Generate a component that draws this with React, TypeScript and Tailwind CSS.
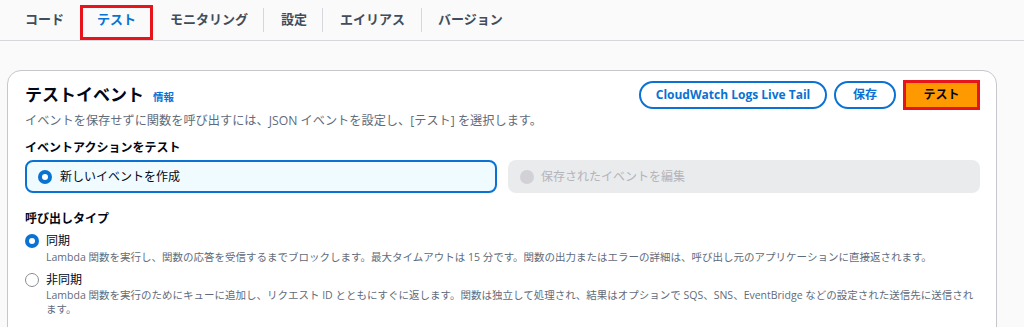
import React from "react";

const font = "font-['Open_Sans','Noto_Sans_CJK_JP',sans-serif]";

function Radio({ checked, disabled }: { checked?: boolean; disabled?: boolean }) {
  if (disabled) {
    return <span className="block w-[14px] h-[14px] rounded-full bg-[#d1d1d6] shrink-0" />;
  }
  if (checked) {
    return (
      <span className="flex items-center justify-center w-[14px] h-[14px] rounded-full bg-[#0972d3] shrink-0">
        <span className="block w-[6px] h-[6px] rounded-full bg-white" />
      </span>
    );
  }
  return <span className="block w-[14px] h-[14px] rounded-full border-[1.5px] border-[#8c8c94] bg-white shrink-0" />;
}

function Tabs() {
  return (
    <div className="flex items-center h-[41px] pl-[8px] border-b border-[#d5d7dc] text-[13px] font-bold text-[#414d5c]">
      <div className="w-[72px] pl-[17px]">コード</div>
      <div className="relative w-[73px] h-[35px] mt-[5px] pl-[17px] flex items-center text-[#0972d3]">
        <span className="-mt-[5px]">テスト</span>
        {/* red highlight annotation */}
        <span className="absolute inset-0 border-[3px] border-[#e8141b] pointer-events-none" />
      </div>
      <div className="w-[110px] pl-[17px]">モニタリング</div>
      <span className="block w-px h-[24px] bg-[#d5d7dc]" />
      <div className="w-[58px] pl-[17px]">設定</div>
      <span className="block w-px h-[24px] bg-[#d5d7dc]" />
      <div className="w-[98px] pl-[17px]">エイリアス</div>
      <span className="block w-px h-[24px] bg-[#d5d7dc]" />
      <div className="pl-[16px]">バージョン</div>
    </div>
  );
}

export default function App() {
  return (
    <div className={`${font} w-[1024px] h-[327px] overflow-hidden bg-[#fafafa] text-[#000716]`}>
      <Tabs />

      <div className="ml-[7px] mt-[29px] w-[990px] h-[400px] rounded-[14px] border border-[#c6c6cd] bg-white pl-[17px] pr-[16px] pt-[10px]">
        {/* header */}
        <div className="flex justify-between items-center h-[28px]">
          <div className="flex items-baseline gap-[9px]">
            <h2 className="text-[17px] font-bold leading-[24px]">テストイベント</h2>
            <span className="text-[10.5px] font-bold text-[#0972d3]">情報</span>
          </div>
          <div className="flex items-center gap-[7px]">
            <button className="h-[28px] w-[188px] rounded-full border-2 border-[#0972d3] text-[12px] font-bold text-[#0972d3]">
              CloudWatch Logs Live Tail
            </button>
            <button className="h-[28px] w-[62px] rounded-full border-2 border-[#0972d3] text-[12px] font-bold text-[#0972d3]">
              保存
            </button>
            <button className="relative h-[30px] w-[77px] bg-[#ff9900] text-[12px] font-bold text-[#000716]">
              テスト
              <span className="absolute inset-0 border-[3px] border-[#e8141b]" />
            </button>
          </div>
        </div>

        <p className="mt-[4px] text-[12.2px] leading-[16px] text-[#5f6b7a]">
          イベントを保存せずに関数を呼び出すには、JSON イベントを設定し、[テスト] を選択します。
        </p>

        <div className="mt-[11px] text-[12px] font-bold leading-[16px]">イベントアクションをテスト</div>

        <div className="mt-[4px] grid grid-cols-2 gap-[11px]">
          <div className="h-[33px] flex items-center gap-[8px] pl-[11px] rounded-[8px] border-2 border-[#0972d3] bg-[#f0fbff] text-[12px]">
            <Radio checked />
            <span>新しいイベントを作成</span>
          </div>
          <div className="h-[33px] flex items-center gap-[7px] pl-[12px] rounded-[8px] bg-[#e9ebed] text-[12px] text-[#b4b4bb]">
            <Radio disabled />
            <span>保存されたイベントを編集</span>
          </div>
        </div>

        <div className="mt-[18px] text-[12px] font-bold leading-[16px]">呼び出しタイプ</div>

        <div className="mt-[6px] flex items-center gap-[7px] h-[16px] text-[12px]">
          <Radio checked />
          <span>同期</span>
        </div>
        <p className="mt-[1px] pl-[21px] text-[10.5px] leading-[14px] text-[#5f6b7a]">
          Lambda 関数を実行し、関数の応答を受信するまでブロックします。最大タイムアウトは 15 分です。関数の出力またはエラーの詳細は、呼び出し元のアプリケーションに直接返されます。
        </p>

        <div className="mt-[8px] flex items-center gap-[7px] h-[16px] text-[12px]">
          <Radio />
          <span>非同期</span>
        </div>
        <p className="mt-[1px] -mr-[2px] pl-[21px] text-[10.5px] leading-[13.5px] text-[#5f6b7a]">
          Lambda 関数を実行のためにキューに追加し、リクエスト ID とともにすぐに返します。関数は独立して処理され、結果はオプションで SQS、SNS、EventBridge などの設定された送信先に送信されます。
        </p>
      </div>
    </div>
  );
}
